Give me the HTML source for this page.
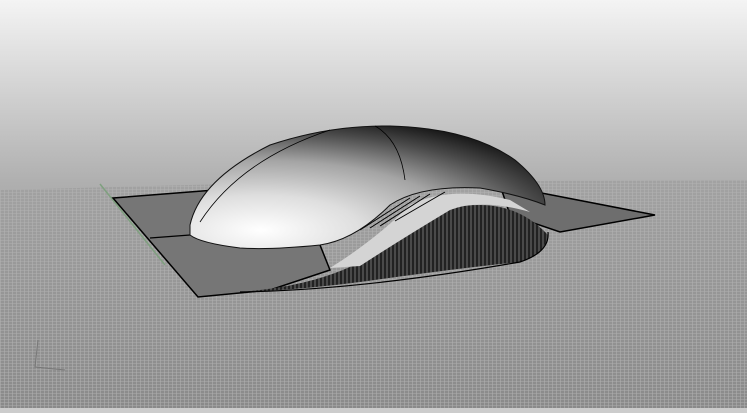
<!DOCTYPE html>
<html><head><style>html,body{margin:0;padding:0;overflow:hidden;background:#ccc}</style></head>
<body>
<svg width="747" height="408" viewBox="0 0 747 408" xmlns="http://www.w3.org/2000/svg">
<defs>
<linearGradient id="bg" x1="0" y1="0" x2="0" y2="1">
<stop offset="0" stop-color="#f4f4f4"/><stop offset="0.45" stop-color="#afafaf"/><stop offset="1" stop-color="#8a8a8a"/></linearGradient>
<linearGradient id="pl" x1="0" y1="0" x2="0" y2="1">
<stop offset="0" stop-color="#a2a2a2"/><stop offset="1" stop-color="#8a8a8a"/></linearGradient>
<pattern id="gr" width="4" height="3" patternUnits="userSpaceOnUse">
<path d="M0 0.5H4M0.5 0V3" stroke="#b6b6b6" stroke-width="0.6"/></pattern>
<pattern id="rib" width="4" height="4" patternUnits="userSpaceOnUse">
<rect width="4" height="4" fill="#4a4a4a"/><path d="M1 0V4" stroke="#0c0c0c" stroke-width="1.3"/></pattern>
<radialGradient id="dome" cx="0.2" cy="0.85" r="0.95">
<stop offset="0" stop-color="#ffffff"/><stop offset="0.3" stop-color="#dedede"/><stop offset="0.6" stop-color="#a4a4a4"/><stop offset="0.85" stop-color="#4a4a4a"/><stop offset="1" stop-color="#1a1a1a"/></radialGradient>
</defs>
<rect width="747" height="408" fill="url(#bg)"/>
<polygon points="0,190 300,182 747,180 747,408 0,408" fill="url(#pl)"/>
<polygon points="0,190 300,182 747,180 747,408 0,408" fill="url(#gr)" opacity="0.8"/>
<line x1="100" y1="184" x2="165" y2="265" stroke="#7fa07f" stroke-width="1.5"/>
<polygon points="113,198 215,190 300,195 330,270 270,290 198,297" fill="#767676" stroke="#000" stroke-width="1.5"/>
<line x1="150" y1="238" x2="190" y2="235" stroke="#000" stroke-width="1.2"/>
<polygon points="500,185 655,215 560,232 510,215" fill="#6e6e6e" stroke="#000" stroke-width="1.5"/>
<path d="M240,292 Q300,290 360,282 Q460,268 520,262 Q545,255 548,235 Q520,205 480,205 Q420,205 380,250 Q330,285 240,292Z" fill="url(#rib)"/>
<path d="M330,268 Q375,240 410,205 Q450,185 510,200 L530,212 Q480,198 450,210 Q400,240 360,266Z" fill="#d4d4d4"/>
<path d="M360,230 L410,198 M370,228 L420,196 M380,226 L430,194 M395,221 L445,192" stroke="#000" stroke-width="1"/>
<path d="M240,292 Q360,290 520,262 Q550,252 548,232" fill="none" stroke="#000" stroke-width="1.2"/>
<path d="M190,225 Q200,180 270,145 Q330,125 390,126 Q470,128 515,160 Q545,185 545,205 Q520,195 480,188 Q420,185 390,205 Q355,240 320,245 Q270,250 240,248 Q200,243 190,235Z" fill="url(#dome)" stroke="#111" stroke-width="1"/>
<path d="M200,222 Q240,160 330,130" fill="none" stroke="#000" stroke-width="0.8"/>
<path d="M375,126 Q400,140 405,180" fill="none" stroke="#000" stroke-width="0.8"/>
<path d="M38,340 L35,367 L65,370" fill="none" stroke="#777" stroke-width="1"/>
</svg>
</body></html>
